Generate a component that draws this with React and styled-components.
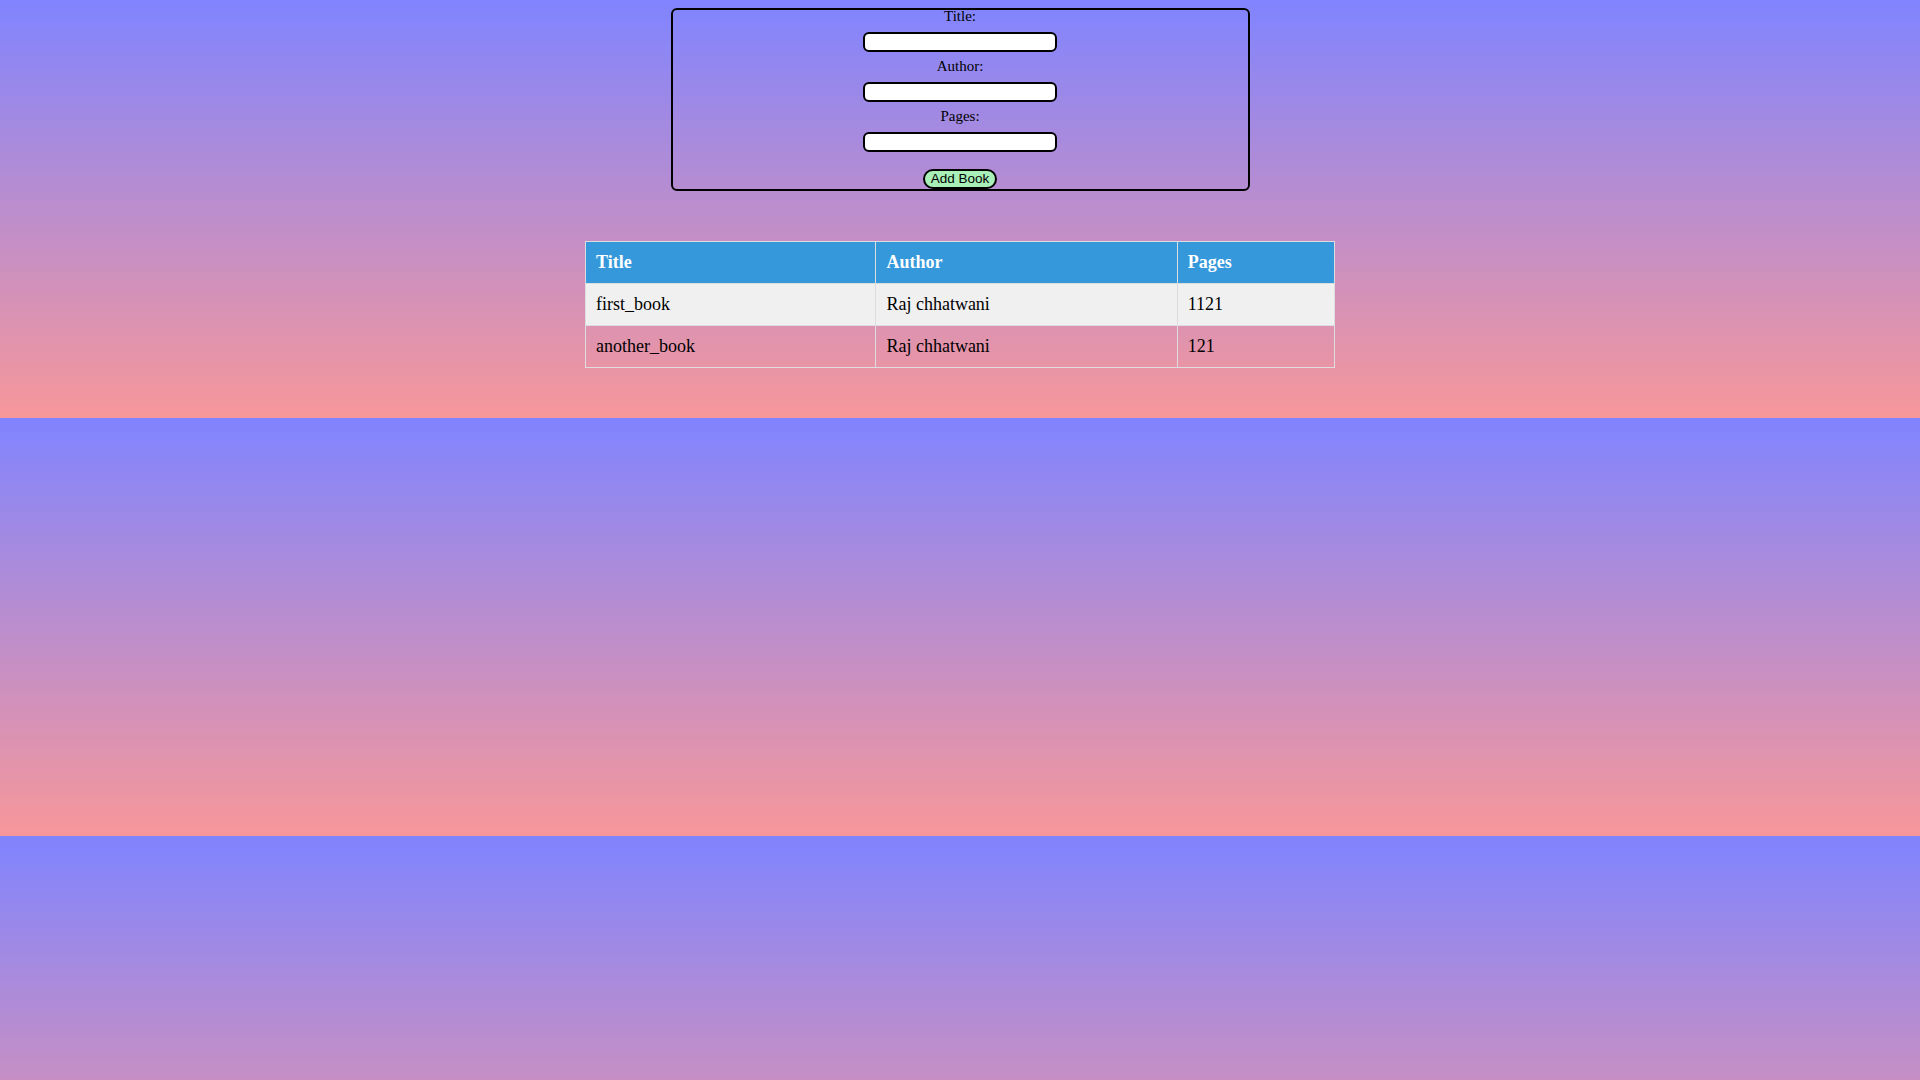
import React, { useState } from "react";
import styled, { createGlobalStyle } from "styled-components";

const GlobalStyle = createGlobalStyle`
  body {
    margin: 8px;
    font-family: "Liberation Serif", "Times New Roman", serif;
    background: linear-gradient(#8084ff, #f7979a);
  }
`;

const books = [
  { title: "first_book", author: "Raj chhatwani", pages: 1121 },
  { title: "another_book", author: "Raj chhatwani", pages: 121 },
];

const App = () => {
  const [list] = useState(books);

  return (
    <>
      <GlobalStyle />
      <BookForm onSubmit={(e) => e.preventDefault()}>
        <Label>Title:</Label>
        <Input type="text" />
        <Label>Author:</Label>
        <Input type="text" />
        <Label>Pages:</Label>
        <Input type="number" $last />
        <AddButton type="submit">Add Book</AddButton>
      </BookForm>
      <Table>
        <thead>
          <tr>
            <Th>Title</Th>
            <Th>Author</Th>
            <Th>Pages</Th>
          </tr>
        </thead>
        <tbody>
          {list.map((b, i) => (
            <Row key={i} $odd={i % 2 === 0}>
              <Td>{b.title}</Td>
              <Td>{b.author}</Td>
              <Td>{b.pages}</Td>
            </Row>
          ))}
        </tbody>
      </Table>
    </>
  );
};

export default App;

const BookForm = styled.form`
  width: 575px;
  margin: 0 auto;
  border: 2px solid black;
  border-radius: 6px;
  display: flex;
  flex-direction: column;
  align-items: center;
`;

const Label = styled.label`
  display: block;
  font-size: 15px;
  line-height: 13px;
`;

const Input = styled.input`
  box-sizing: border-box;
  width: 194px;
  height: 20px;
  margin: 9px 0 ${(p) => (p.$last ? "17px" : "8px")};
  border: 2px solid black;
  border-radius: 6px;
  background: white;
  outline: none;
  -moz-appearance: textfield;
  &::-webkit-inner-spin-button,
  &::-webkit-outer-spin-button {
    -webkit-appearance: none;
    margin: 0;
  }
`;

const AddButton = styled.button`
  font-family: "Liberation Sans", Arial, sans-serif;
  font-size: 13.5px;
  padding: 1px 6px;
  height: 20px;
  line-height: 14px;
  border: 2px solid black;
  border-radius: 10px;
  background: #a8f0b8;
  color: black;
  cursor: pointer;
`;

const Table = styled.table`
  width: 750px;
  margin: 50px auto 42px;
  border-collapse: collapse;
  font-size: 18px;
`;

const Th = styled.th`
  background: #3498db;
  color: white;
  text-align: left;
  padding: 10px;
  border: 1px solid #ddd;
`;

const Row = styled.tr`
  background: ${(p) => (p.$odd ? "#f0f0f0" : "transparent")};
`;

const Td = styled.td`
  padding: 10px;
  border: 1px solid #ddd;
`;
